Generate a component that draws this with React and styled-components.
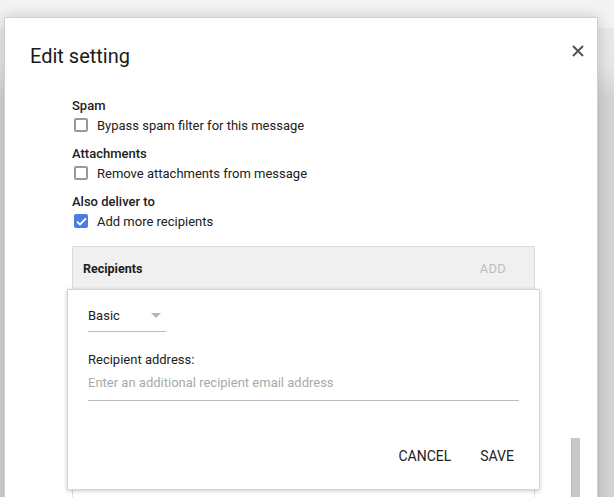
import React from "react";
import styled, { createGlobalStyle } from "styled-components";

const GlobalStyle = createGlobalStyle`
  html, body {
    margin: 0;
    padding: 0;
    background: #d3d3d3;
    font-family: Roboto, "Liberation Sans", Arial, sans-serif;
    color: #212121;
  }
`;

const Backdrop = styled.div`
  position: relative;
  width: 614px;
  height: 497px;
  overflow: hidden;
  background: linear-gradient(to bottom, #f3f3f3 0, #f3f3f3 28px, #e9e9e9 28px, #e6e6e6 66px, #d3d3d3 100px);
  padding: 17px 16px 0 4px;
  box-sizing: border-box;
`;

const Dialog = styled.div`
  position: relative;
  width: 594px;
  height: 520px;
  background: #fff;
  border: 1px solid #cfcfcf;
  box-sizing: border-box;
  box-shadow: 0 0 14px rgba(0, 0, 0, 0.18);
`;

const Header = styled.div`
  display: flex;
  align-items: flex-start;
  justify-content: space-between;
  padding: 26px 11px 0 25px;
  height: 24px;
`;

const Title = styled.h2`
  margin: 0;
  font-size: 20px;
  line-height: 24px;
  font-weight: 400;
  color: #1a1a1a;
`;

const CloseButton = styled.button`
  display: flex;
  align-items: center;
  justify-content: center;
  width: 16px;
  height: 16px;
  margin-top: -1px;
  padding: 0;
  border: none;
  background: none;
  cursor: pointer;
  color: #555;
`;

const Body = styled.div`
  padding: 30px 0 0 67px;
  width: 463px;
`;

const Section = styled.div`
  margin-bottom: 11px;
`;

const SectionLabel = styled.div`
  font-size: 13px;
  line-height: 16px;
  font-weight: 500;
  color: #212121;
  margin-bottom: 1px;
`;

const CheckRow = styled.label`
  display: flex;
  align-items: center;
  height: 20px;
  gap: 9px;
  font-size: 13px;
  color: #212121;
  cursor: pointer;
`;

const Box = styled.span`
  width: 14px;
  height: 14px;
  margin-left: 2px;
  box-sizing: border-box;
  border-radius: 2px;
  border: ${(p) => (p.$checked ? "none" : "2px solid #9a9a9a")};
  background: ${(p) => (p.$checked ? "#4a7de2" : "#fff")};
  display: flex;
  align-items: center;
  justify-content: center;
`;

const Panel = styled.div`
  position: relative;
  margin-top: 15px;
  border: 1px solid #dcdcdc;
  background: #fff;
  height: 300px;
`;

const PanelHeader = styled.div`
  display: flex;
  align-items: center;
  justify-content: space-between;
  height: 42px;
  padding: 0 28px 0 10px;
  background: #f0f0f0;
`;

const PanelTitle = styled.span`
  font-size: 12.5px;
  font-weight: 700;
  color: #212121;
`;

const AddButton = styled.span`
  font-size: 13px;
  color: #bdbdbd;
  letter-spacing: 0.2px;
`;

const Popover = styled.div`
  position: absolute;
  top: 42px;
  left: -6px;
  right: -6px;
  height: 201px;
  background: #fff;
  border: 1px solid #d6d6d6;
  box-sizing: border-box;
  box-shadow: 0 1px 4px rgba(0, 0, 0, 0.22);
  padding: 11px 20px 0 20px;
  display: flex;
  flex-direction: column;
`;

const Select = styled.div`
  display: flex;
  align-items: center;
  justify-content: space-between;
  width: 78px;
  height: 28px;
  border-bottom: 1px solid #bdbdbd;
  font-size: 13px;
  color: #212121;
  padding-bottom: 2px;
`;

const Caret = styled.span`
  width: 0;
  height: 0;
  margin-right: 5px;
  border-left: 5px solid transparent;
  border-right: 5px solid transparent;
  border-top: 5px solid #b5b5b5;
`;

const FieldLabel = styled.div`
  margin-top: 19px;
  font-size: 13px;
  line-height: 18px;
  color: #212121;
`;

const Input = styled.input`
  margin-top: 6px;
  border: none;
  border-bottom: 1px solid #bdbdbd;
  outline: none;
  padding: 0 0 10px 0;
  font-family: inherit;
  font-size: 13px;
  color: #212121;
  background: transparent;

  &::placeholder {
    color: #a9a9a9;
  }
`;

const Actions = styled.div`
  display: flex;
  justify-content: flex-end;
  gap: 29px;
  margin-top: 47px;
  padding-right: 5px;
`;

const TextButton = styled.button`
  border: none;
  background: none;
  padding: 0;
  font-family: inherit;
  font-size: 14px;
  font-weight: 400;
  color: #222;
  cursor: pointer;
`;

const ScrollThumb = styled.div`
  position: absolute;
  right: 17px;
  top: 420px;
  width: 8px;
  height: 100px;
  background: #c8c8c8;
  border-left: 1px solid #b9b9b9;
`;

const Check = () => (
  <svg width="11" height="9" viewBox="0 0 11 9">
    <path d="M1 4.6 L4 7.4 L10 1.4" fill="none" stroke="#fff" strokeWidth="1.8" />
  </svg>
);

const sections = [
  { label: "Spam", text: "Bypass spam filter for this message", checked: false },
  { label: "Attachments", text: "Remove attachments from message", checked: false },
  { label: "Also deliver to", text: "Add more recipients", checked: true },
];

const App = () => {
  return (
    <>
      <GlobalStyle />
      <Backdrop>
        <Dialog>
          <Header>
            <Title>Edit setting</Title>
            <CloseButton aria-label="Close">
              <svg width="12" height="12" viewBox="0 0 12 12">
                <path d="M1 1 L11 11 M11 1 L1 11" stroke="#555" strokeWidth="2" />
              </svg>
            </CloseButton>
          </Header>
          <Body>
            {sections.map((s) => (
              <Section key={s.label}>
                <SectionLabel>{s.label}</SectionLabel>
                <CheckRow>
                  <Box $checked={s.checked}>{s.checked && <Check />}</Box>
                  {s.text}
                </CheckRow>
              </Section>
            ))}
            <Panel>
              <PanelHeader>
                <PanelTitle>Recipients</PanelTitle>
                <AddButton>ADD</AddButton>
              </PanelHeader>
              <Popover>
                <Select>
                  Basic
                  <Caret />
                </Select>
                <FieldLabel>Recipient address:</FieldLabel>
                <Input placeholder="Enter an additional recipient email address" />
                <Actions>
                  <TextButton>CANCEL</TextButton>
                  <TextButton>SAVE</TextButton>
                </Actions>
              </Popover>
            </Panel>
          </Body>
          <ScrollThumb />
        </Dialog>
      </Backdrop>
    </>
  );
};

export default App;
